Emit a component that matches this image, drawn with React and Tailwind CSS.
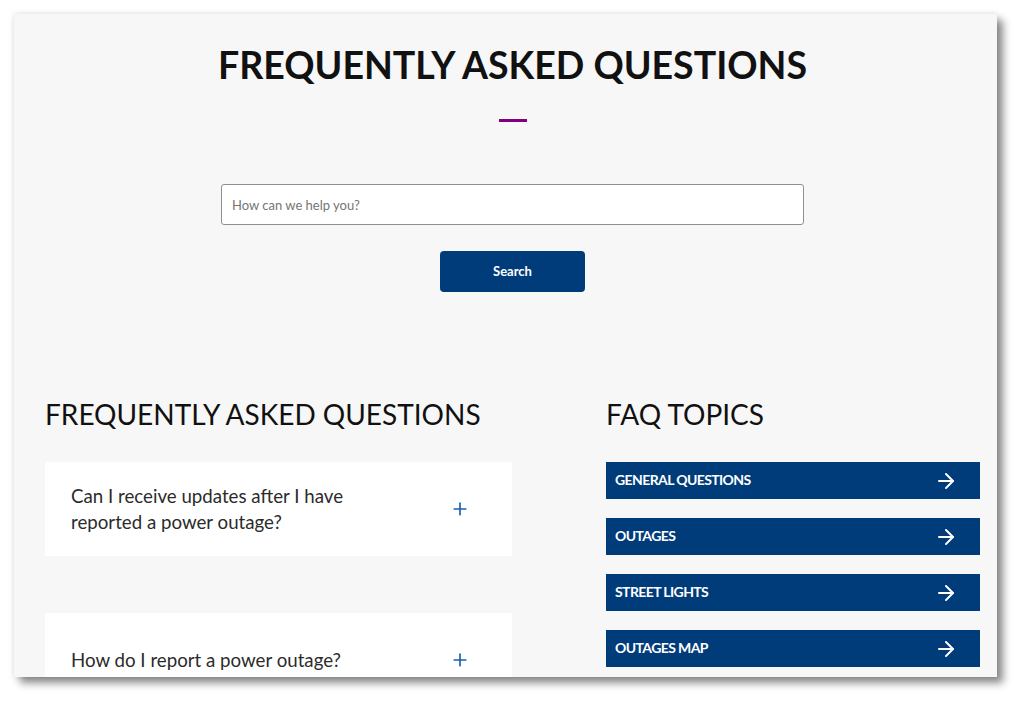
import { ArrowRight, Plus } from "lucide-react";

const faqs = [
  "Can I receive updates after I have reported a power outage?",
  "How do I report a power outage?",
];

const topics = ["GENERAL QUESTIONS", "OUTAGES", "STREET LIGHTS", "OUTAGES MAP"];

export default function App() {
  return (
    <div className="w-[1024px] h-[705px] bg-white pl-[14px] pt-[14px] overflow-hidden font-['Lato',sans-serif]">
      <div className="w-[983px] h-[663px] bg-[#f7f7f7] overflow-hidden pl-[31px] pr-[17px] pt-[28px] shadow-[6px_6px_8px_rgba(0,0,0,0.45),0_0_6px_rgba(0,0,0,0.12)]">
        {/* Hero search */}
        <div className="flex flex-col items-center">
          <h1 className="text-[37.5px] leading-[46px] font-bold text-[#111]">FREQUENTLY ASKED QUESTIONS</h1>
          <div className="mt-[31px] w-[28px] h-[3px] bg-[#800080]" />
          <input
            className="mt-[62px] w-[583px] h-[41px] bg-white border border-[#8f8f8f] rounded-[3px] px-[10px] text-[13px] text-[#333] placeholder:text-[#757575] outline-none"
            placeholder="How can we help you?"
          />
          <button className="mt-[26px] w-[145px] h-[41px] rounded-[4px] bg-[#013c7a] text-white text-[13px] font-bold">
            Search
          </button>
        </div>

        {/* Questions + topics */}
        <div className="mt-[105px] flex gap-[94px]">
          <div className="w-[467px]">
            <h2 className="text-[28px] leading-[34px] text-[#111]">FREQUENTLY ASKED QUESTIONS</h2>
            <div className="mt-[31px] flex flex-col gap-[57px]">
              {faqs.map((q) => (
                <div key={q} className="bg-white min-h-[93px] flex items-center pl-[26px] pr-[42px] py-[21px]">
                  <div className="w-[310px] text-[18.7px] leading-[26px] text-[#2b2b2b]">{q}</div>
                  <Plus size={20} strokeWidth={2} className="ml-auto text-[#1b5cb8]" />
                </div>
              ))}
            </div>
          </div>
          <div className="w-[374px]">
            <h2 className="text-[28px] leading-[34px] text-[#111]">FAQ TOPICS</h2>
            <div className="mt-[31px] flex flex-col gap-[19px]">
              {topics.map((t) => (
                <div key={t} className="h-[37px] bg-[#013c7a] flex items-center pl-[9px] pr-[22px] text-white">
                  <span className="text-[14px] leading-[16px] -mt-[1px] font-bold tracking-[-0.6px]">{t}</span>
                  <ArrowRight size={24} strokeWidth={2} className="ml-auto" />
                </div>
              ))}
            </div>
          </div>
        </div>
      </div>
    </div>
  );
}
